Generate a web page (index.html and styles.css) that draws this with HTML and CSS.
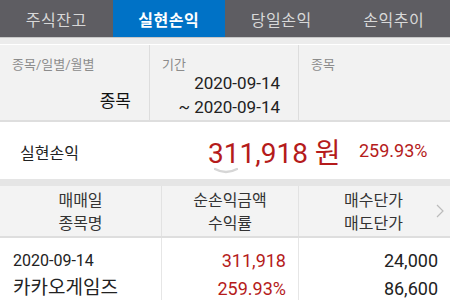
FILE: index.html
```html
<!DOCTYPE html>
<html lang="ko">
<head>
    <meta charset="UTF-8">
    <title>실현손익</title>
    <link rel="stylesheet" href="styles.css">
</head>
<body>
    <div class="tabs">
        <div class="tab">주식잔고</div>
        <div class="tab active">실현손익</div>
        <div class="tab">당일손익</div>
        <div class="tab">손익추이</div>
    </div>
    <div class="strip"></div>

    <div class="filter">
        <div class="cell">
            <div class="label">종목/일별/월별</div>
            <div class="value">종목</div>
        </div>
        <div class="cell">
            <div class="label">기간</div>
            <div class="dates">
                <div>2020-09-14</div>
                <div>~ 2020-09-14</div>
            </div>
        </div>
        <div class="cell">
            <div class="label">종목</div>
        </div>
    </div>

    <div class="summary">
        <div class="summary-title">실현손익</div>
        <div class="summary-amount">311,918 원</div>
        <div class="summary-rate">259.93%</div>
        <svg class="summary-arrow" width="24" height="8" viewBox="0 0 24 8">
            <path d="M1 2 Q12 8 23 2" fill="none" stroke="#d6d6d6" stroke-width="2.5" stroke-linecap="round"/>
        </svg>
    </div>
    <div class="band"></div>

    <div class="head-row">
        <div class="col">매매일<br>종목명</div>
        <div class="col">순손익금액<br>수익률</div>
        <div class="col">매수단가<br>매도단가</div>
        <svg class="more" width="8" height="14" viewBox="0 0 8 14">
            <path d="M1 1 L7 7 L1 13" fill="none" stroke="#bbb" stroke-width="1.2"/>
        </svg>
    </div>

    <div class="data-row">
        <div class="col first">
            <div class="date">2020-09-14</div>
            <div class="name">카카오게임즈</div>
        </div>
        <div class="col num red">
            <div>311,918</div>
            <div>259.93%</div>
        </div>
        <div class="col num">
            <div>24,000</div>
            <div>86,600</div>
        </div>
    </div>
</body>
</html>
```

FILE: styles.css
```css
body {
    margin: 0;
    width: 450px;
    height: 300px;
    overflow: hidden;
    background: #fff;
    font-family: Roboto, "Noto Sans CJK KR", sans-serif;
    color: #222;
}

/* top tabs */
.tabs {
    display: flex;
    height: 37px;
    background: #5e5d62;
    border-bottom: 1px solid #c8c8c8;
}

.tab {
    flex: 1;
    display: flex;
    align-items: center;
    justify-content: center;
    color: #d8d8d8;
    font-size: 16px;
    letter-spacing: 0.5px;
}

.tab.active {
    background: #0072c6;
    color: #fff;
    font-weight: bold;
}

.strip {
    height: 6px;
    background: #ececec;
    border-bottom: 1px solid #fff;
}

/* filter panel */
.filter {
    display: grid;
    grid-template-columns: 150px 149px 1fr;
    height: 75px;
    background: #f2f2f2;
    border-bottom: 2px solid #dedede;
}

.cell {
    border-right: 1px solid #dddddd;
    padding: 9px 12px 0 12px;
}

.cell:last-child {
    border-right: none;
}

.label {
    font-size: 13px;
    color: #8c8c8c;
}

.value {
    text-align: right;
    font-size: 17px;
    margin-top: 14px;
    margin-right: 6px;
    color: #111;
}

.dates {
    text-align: right;
    font-size: 17px;
    line-height: 24px;
    margin-top: -2px;
    margin-right: 6px;
    color: #222;
}

/* summary */
.summary {
    position: relative;
    display: flex;
    align-items: center;
    height: 57px;
    padding-left: 20px;
}

.summary-title {
    width: 188px;
    font-size: 16px;
    color: #222;
    margin-top: 3px;
}

.summary-amount {
    font-size: 28px;
    color: #b51b1b;
    width: 151px;
}

.summary-rate {
    font-size: 18px;
    color: #b51b1b;
}

.summary-arrow {
    position: absolute;
    left: 214px;
    bottom: 4px;
}

.band {
    height: 7px;
    background: #e5e5e5;
}

/* list header */
.head-row {
    position: relative;
    display: grid;
    grid-template-columns: 162px 137px 1fr;
    height: 50px;
    background: #f3f3f3;
    border-bottom: 2px solid #dedede;
}

.head-row .col {
    display: flex;
    align-items: center;
    justify-content: center;
    text-align: center;
    font-size: 16px;
    line-height: 23px;
    padding-top: 2px;
    color: #333;
    border-right: 1px solid #e2e2e2;
}

.head-row .col:last-of-type {
    border-right: none;
    padding-right: 2px;
}

.more {
    position: absolute;
    right: 6px;
    top: 18px;
}

/* list rows */
.data-row {
    display: grid;
    grid-template-columns: 162px 137px 1fr;
    height: 62px;
}

.data-row .col {
    border-right: 1px solid #e6e6e6;
    padding-top: 9px;
}

.data-row .col:last-child {
    border-right: none;
}

.data-row .first {
    padding-left: 13px;
    padding-top: 11px;
}

.date {
    font-size: 16px;
    line-height: 24px;
}

.name {
    font-size: 19px;
    line-height: 30px;
}

.num {
    text-align: right;
    font-size: 18px;
    line-height: 28px;
    padding-right: 12px;
}

.red {
    color: #b51b1b;
}
```
